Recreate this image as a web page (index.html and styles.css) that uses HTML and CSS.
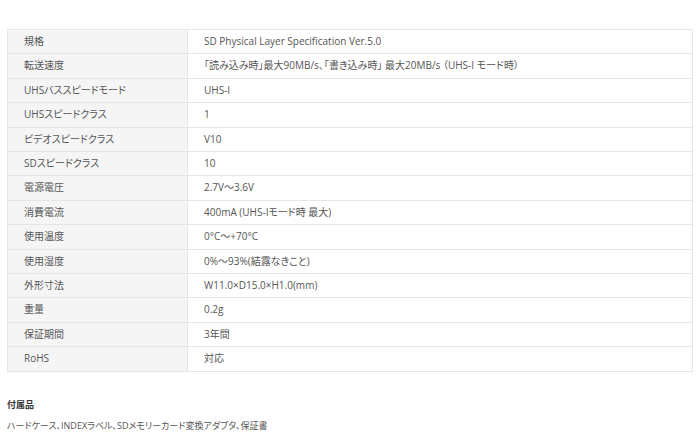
FILE: index.html
```html
<!DOCTYPE html>
<html lang="ja">
  <head>
    <meta charset="UTF-8" />
    <meta name="viewport" content="width=device-width, initial-scale=1.0" />
    <title>仕様</title>
    <link rel="stylesheet" href="styles.css">
  </head>
  <body>
    <div class="spec">
      <table class="spec-table">
        <tr><th>規格</th><td>SD Physical Layer Specification Ver.5.0</td></tr>
        <tr><th>転送速度</th><td>「読み込み時」最大90MB/s、「書き込み時」 最大20MB/s （UHS-I モード時）</td></tr>
        <tr><th>UHSバススピードモード</th><td>UHS-I</td></tr>
        <tr><th>UHSスピードクラス</th><td>1</td></tr>
        <tr><th>ビデオスピードクラス</th><td>V10</td></tr>
        <tr><th>SDスピードクラス</th><td>10</td></tr>
        <tr><th>電源電圧</th><td>2.7V～3.6V</td></tr>
        <tr><th>消費電流</th><td>400mA (UHS-Iモード時 最大)</td></tr>
        <tr><th>使用温度</th><td>0°C～+70°C</td></tr>
        <tr><th>使用湿度</th><td>0%～93%(結露なきこと)</td></tr>
        <tr><th>外形寸法</th><td>W11.0×D15.0×H1.0(mm)</td></tr>
        <tr><th>重量</th><td>0.2g</td></tr>
        <tr><th>保証期間</th><td>3年間</td></tr>
        <tr><th>RoHS</th><td>対応</td></tr>
      </table>

      <div class="accessories">
        <h4>付属品</h4>
        <p>ハードケース、INDEXラベル、SDメモリーカード変換アダプタ、保証書</p>
      </div>
    </div>
  </body>
</html>
```

FILE: styles.css
```css
body {
  margin: 0;
  padding: 0;
  background-color: #fff;
  color: #555;
  font-family: "Open Sans", "Noto Sans CJK JP", sans-serif;
  font-size: 10px;
  font-feature-settings: "palt";
}
.spec {
  padding: 29px 7px 0;
}
.spec-table {
  width: 100%;
  border-collapse: collapse;
  border: 1px solid #e6e6e6;
}
.spec-table th,
.spec-table td {
  border: 1px solid #e6e6e6;
  padding: 4px 16px;
  line-height: 15.4px;
  text-align: left;
  font-weight: normal;
}
.spec-table th {
  width: 147px;
  background-color: #f5f5f5;
}
.accessories {
  margin-top: 26px;
  font-size: 9px;
}
.accessories h4 {
  margin: 0 0 8px;
  font-size: 9px;
  color: #333;
}
.accessories p {
  margin: 0;
  line-height: 13px;
}
```
